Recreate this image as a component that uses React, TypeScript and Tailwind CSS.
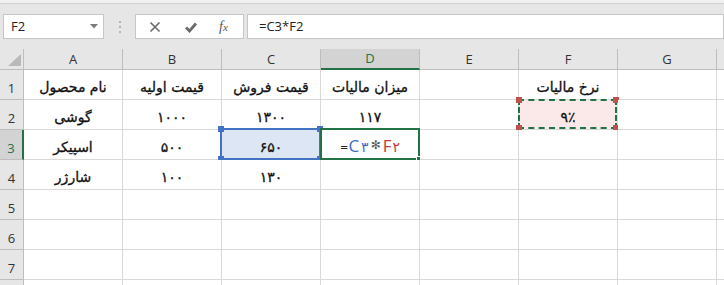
import React from "react";

const COLS = ["A", "B", "C", "D", "E", "F", "G"];

const ROWS: Record<number, string[]> = {
  1: ["نام محصول", "قیمت اولیه", "قیمت فروش", "میزان مالیات", "", "نرخ مالیات", ""],
  2: ["گوشی", "۱۰۰۰", "۱۳۰۰", "۱۱۷", "", "۹٪", ""],
  3: ["اسپیکر", "۵۰۰", "۶۵۰", "", "", "", ""],
  4: ["شارژر", "۱۰۰", "۱۳۰", "", "", "", ""],
};

const ui = "font-['Open_Sans','Noto_Sans',sans-serif]";
const fa = "font-['DejaVu_Sans','Noto_Sans',sans-serif]";

function Formula() {
  // D3 formula while editing, references coloured like Excel
  return (
    <span dir="ltr" className="flex items-end">
      <span className="text-[10px] leading-none text-[#222] mb-[1px]">=</span>
      <span className={`${ui} text-[17px] leading-none text-[#3b6cc5]`}>C</span>
      <span className="text-[14px] leading-none text-[#3b6cc5] ml-[2px]">۳</span>
      <span className="text-[12px] leading-none text-[#555] mx-[2px] mb-[3px]">✻</span>
      <span className={`${ui} text-[17px] leading-none text-[#c0393b]`}>F</span>
      <span className="text-[14px] leading-none text-[#c0393b] ml-[1px]">۲</span>
    </span>
  );
}

function Handle({ pos, color }: { pos: string; color: string }) {
  return <span className={`absolute w-[6px] h-[6px] ${pos} ${color}`} />;
}

function Cell({ row, col, text }: { row: number; col: number; text: string }) {
  const isC3 = row === 3 && col === 2;
  const isD3 = row === 3 && col === 3;
  const isF2 = row === 2 && col === 5;
  let bg = "bg-white";
  if (isC3) bg = "bg-[#dce6f4]";
  if (isF2) bg = "bg-[#fbe9e9]";
  return (
    <div
      className={`relative h-[30px] border-r border-b border-[#d9d9d9] ${bg} flex items-end justify-center pb-[5px] ${fa} text-[14px] leading-none text-[#111]`}
      dir="rtl"
    >
      {isD3 ? <Formula /> : <span className="[-webkit-text-stroke:0.3px_#111]">{text}</span>}
      {isC3 && (
        <div className="absolute -left-[2px] -top-[2px] -right-[1px] -bottom-[1px] border-2 border-[#4472c4]">
          <Handle pos="-left-[4px] -top-[4px]" color="bg-[#4472c4]" />
          <Handle pos="-right-[4px] -top-[4px]" color="bg-[#4472c4]" />
          <Handle pos="-left-[4px] -bottom-[4px]" color="bg-[#4472c4]" />
          <Handle pos="-right-[4px] -bottom-[4px]" color="bg-[#4472c4]" />
        </div>
      )}
      {isD3 && (
        <div className="absolute -left-[1px] -top-[2px] -right-[1px] -bottom-[1px] border-2 border-[#217346]">
          <span className="absolute -right-[4px] -bottom-[4px] w-[6px] h-[6px] bg-[#217346] border border-white" />
        </div>
      )}
      {isF2 && (
        <div className="absolute -left-[1px] -top-[1px] right-0 bottom-0 border-2 border-dashed border-[#217346]">
          <Handle pos="-left-[4px] -top-[4px]" color="bg-[#c0504d]" />
          <Handle pos="-right-[4px] -top-[4px]" color="bg-[#c0504d]" />
          <Handle pos="-left-[4px] -bottom-[4px]" color="bg-[#c0504d]" />
          <Handle pos="-right-[4px] -bottom-[4px]" color="bg-[#c0504d]" />
        </div>
      )}
    </div>
  );
}

export default function App() {
  const rows = [1, 2, 3, 4, 5, 6, 7, 8];
  return (
    <div className="w-[724px] h-[285px] overflow-hidden bg-white">
      {/* formula bar */}
      <div className="h-[49px] bg-[#e6e6e6] border-t-[3px] border-[#f0f0f0] relative">
        <div className="absolute left-0 right-0 top-0 h-px bg-[#d2d2d2]" />
        <div className="flex items-center pt-[11px] pl-[3px]">
          <div className={`w-[101px] h-[25px] bg-white border border-[#c6c6c6] flex items-center justify-between pl-[7px] pr-[5px] ${ui} text-[13px] text-[#222]`}>
            <span>F2</span>
            <svg width="8" height="5" viewBox="0 0 8 5">
              <path d="M0 0h8L4 4.5z" fill="#7a7a7a" />
            </svg>
          </div>
          <div className="w-[31px] flex flex-col items-center gap-[3px]">
            <span className="w-[2px] h-[2px] bg-[#b5b5b5]" />
            <span className="w-[2px] h-[2px] bg-[#b5b5b5]" />
            <span className="w-[2px] h-[2px] bg-[#b5b5b5]" />
          </div>
          <div className="w-[109px] h-[25px] bg-white border border-[#c6c6c6] flex items-center">
            <svg width="12" height="12" viewBox="0 0 12 12" className="ml-[13px]">
              <path d="M1.5 1.5l9 9M10.5 1.5l-9 9" stroke="#6b6b6b" strokeWidth="1.6" />
            </svg>
            <svg width="14" height="12" viewBox="0 0 14 12" className="ml-[23px]">
              <path d="M2 6.5l3.5 3.5L12 2.5" stroke="#6b6b6b" strokeWidth="2.8" fill="none" />
            </svg>
            <span className="ml-[21px] font-['Liberation_Serif',serif] italic text-[14px] text-[#555] leading-none">
              f<span className="text-[11px]">x</span>
            </span>
          </div>
          <div className={`ml-[3px] flex-1 h-[25px] bg-white border border-[#c6c6c6] flex items-center pl-[11px] ${ui} text-[13px] text-[#222]`}>
            =C3*F2
          </div>
        </div>
      </div>

      {/* sheet */}
      <div className="grid grid-cols-[24px_repeat(7,99px)_1fr]">
        <div className="h-[21px] bg-[#e6e6e6] border-r border-b border-[#bdbdbd] relative">
          <svg width="13" height="12" viewBox="0 0 13 12" className="absolute left-[8px] top-[5px]">
            <path d="M13 0V12H0z" fill="#b9b9b9" />
          </svg>
        </div>
        {COLS.map((c, i) => (
          <div
            key={c}
            className={`h-[21px] flex items-center justify-center ${ui} text-[13px] leading-none border-r ${
              i === 3
                ? "bg-[#d3d3d3] text-[#217346] border-b-2 border-b-[#217346] border-r-[#bdbdbd]"
                : "bg-[#e6e6e6] text-[#333] border-b border-[#bdbdbd]"
            }`}
          >
            {c}
          </div>
        ))}
        <div className="h-[21px] bg-[#e6e6e6] border-b border-[#bdbdbd]" />

        {rows.map((r) => (
          <React.Fragment key={r}>
            <div
              className={`h-[30px] flex items-end justify-center pb-[4px] ${ui} text-[13px] leading-none border-b border-[#bdbdbd] ${
                r === 3
                  ? "bg-[#d3d3d3] text-[#217346] border-r-2 border-r-[#217346]"
                  : "bg-[#e6e6e6] text-[#333] border-r border-r-[#bdbdbd]"
              }`}
            >
              {r < 8 ? r : ""}
            </div>
            {COLS.map((_, ci) => (
              <Cell key={ci} row={r} col={ci} text={ROWS[r]?.[ci] ?? ""} />
            ))}
            <div className="h-[30px] border-b border-[#d9d9d9] bg-white" />
          </React.Fragment>
        ))}
      </div>
    </div>
  );
}
